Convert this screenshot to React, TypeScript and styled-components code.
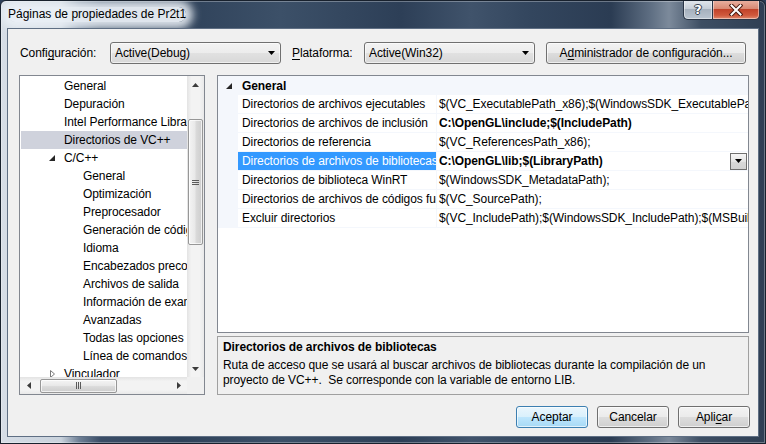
import React from 'react';
import styled, { createGlobalStyle, css } from 'styled-components';

const GlobalStyle = createGlobalStyle`
  html, body { margin: 0; padding: 0; background: #2c3e57; }
  body {
    font-family: "Liberation Sans", Arial, sans-serif;
    font-size: 12px;
    letter-spacing: -0.08px;
    color: #000;
  }
  * { box-sizing: border-box; }
`;

const Frame = styled.div`
  width: 766px;
  height: 444px;
  display: flex;
  flex-direction: column;
  border: 1px solid #18212d;
  border-radius: 6px 6px 0 0;
  overflow: hidden;
  background: linear-gradient(
    to right,
    #d6dde6 0px,
    #c9d2dc 60px,
    #6f8096 78px,
    #3a4d66 100px,
    #2f425a 180px,
    #3c5068 280px,
    #2d3f57 400px,
    #40536b 470px,
    #33465e 530px,
    #2b3c53 610px,
    #5f6f83 650px,
    #7c8a9b 668px,
    #3d4e63 700px,
    #2e3e53 766px
  );
  box-shadow: inset 0 0 0 1px rgba(255, 255, 255, 0.3);
`;

const TitleBar = styled.div`
  height: 27px;
  display: flex;
  align-items: center;
  padding: 0 5px 0 7px;
`;

const TitleText = styled.span`
  font-size: 12px;
  line-height: 15px;
  letter-spacing: 0;
  color: #000;
  background: rgba(234, 239, 245, 0.94);
  border-radius: 10px;
  box-shadow: 0 0 9px 7px rgba(234, 239, 245, 0.9);
`;

const CaptionGroup = styled.div`
  margin-left: auto;
  align-self: flex-start;
  margin-top: -1px;
  display: flex;
`;

const CaptionButton = styled.div<{ $kind: 'help' | 'close' }>`
  height: 20px;
  display: flex;
  align-items: center;
  justify-content: center;
  border: 1px solid #2a3647;
  border-top: none;
  box-shadow: inset 0 0 0 1px rgba(255, 255, 255, 0.45);
  ${(p) =>
    p.$kind === 'help'
      ? css`
          width: 29px;
          border-radius: 0 0 0 5px;
          border-right: none;
          background: linear-gradient(#e3e8ee 0%, #c7cfd8 45%, #a6b1be 50%, #b9c4d0 100%);
        `
      : css`
          width: 48px;
          border-radius: 0 0 5px 0;
          background: linear-gradient(#eab3a4 0%, #d98a74 45%, #c1432a 50%, #cf583c 80%, #e08a6e 100%);
        `}
`;

const HelpGlyph = styled.span`
  font-family: "DejaVu Sans", sans-serif;
  font-weight: bold;
  font-size: 13px;
  line-height: 13px;
  color: #fff;
  text-shadow: 0 0 1px #2b3440, 1px 0 0 #3a4656, -1px 0 0 #3a4656, 0 1px 0 #3a4656, 0 -1px 0 #3a4656;
`;

const Client = styled.div`
  flex: 1;
  margin: 0 6px 6px;
  border: 1px solid #5f6f84;
  background: #f0f0f0;
  display: flex;
  flex-direction: column;
`;

const TopRow = styled.div`
  margin-top: 13px;
  height: 22px;
  padding-left: 12px;
  display: flex;
  align-items: center;
`;

const Label = styled.span<{ $w: number }>`
  width: ${(p) => p.$w}px;
  flex: none;
  white-space: nowrap;
`;

const Key = styled.span`
  text-decoration: underline;
  text-underline-offset: 2px;
`;

const Combo = styled.div<{ $gap: number }>`
  width: 171px;
  height: 22px;
  flex: none;
  margin-right: ${(p) => p.$gap}px;
  border: 1px solid #707070;
  border-radius: 3px;
  background: linear-gradient(#f3f3f3 0%, #ececec 50%, #e1e1e1 50%, #d8d8d8 100%);
  box-shadow: inset 0 0 0 1px rgba(255, 255, 255, 0.6);
  display: flex;
  align-items: center;
  padding: 0 5px 0 4px;
`;

const ComboText = styled.span`
  flex: 1;
  white-space: nowrap;
  overflow: hidden;
`;

const PushButton = styled.div<{ $w: number; $default?: boolean }>`
  width: ${(p) => p.$w}px;
  height: 22px;
  flex: none;
  border: 1px solid ${(p) => (p.$default ? '#3c7fb1' : '#707070')};
  border-radius: 3px;
  background: ${(p) =>
    p.$default
      ? 'linear-gradient(#eaf6fd 0%, #d9f0fc 50%, #bee6fd 50%, #a7d9f5 100%)'
      : 'linear-gradient(#f3f3f3 0%, #ebebeb 50%, #dddddd 50%, #cfcfcf 100%)'};
  box-shadow: inset 0 0 0 1px rgba(255, 255, 255, 0.65);
  display: flex;
  align-items: center;
  justify-content: center;
  white-space: nowrap;
`;

const Main = styled.div`
  margin-top: 11px;
  height: 320px;
  display: flex;
  gap: 12px;
  padding: 0 9px 0 11px;
`;

/* ---------- tree ---------- */

const TreePanel = styled.div`
  width: 186px;
  height: 320px;
  flex: none;
  border: 1px solid #828790;
  background: #fff;
  display: flex;
  flex-direction: column;
`;

const TreeBody = styled.div`
  flex: 1;
  display: flex;
  min-height: 0;
`;

const TreeContent = styled.div`
  flex: 1;
  overflow: hidden;
  padding-top: 1px;
`;

const TreeRow = styled.div<{ $level: number; $selected?: boolean }>`
  height: 18px;
  margin-left: 1px;
  display: flex;
  align-items: center;
  padding-left: ${(p) => 27 + 19 * (p.$level - 1)}px;
  background: ${(p) => (p.$selected ? '#cfd2dc' : 'transparent')};
  white-space: nowrap;
`;

const Expander = styled.span`
  width: 16px;
  flex: none;
  display: flex;
  align-items: center;
`;

const VScroll = styled.div`
  width: 17px;
  flex: none;
  display: flex;
  flex-direction: column;
  background: linear-gradient(to right, #e3e3e3, #f3f3f3 25%, #f3f3f3 75%, #e9e9e9);
`;

const HScrollRow = styled.div`
  height: 17px;
  flex: none;
  display: flex;
`;

const HScroll = styled.div`
  flex: 1;
  display: flex;
  align-items: center;
  background: linear-gradient(#e3e3e3, #f3f3f3 25%, #f3f3f3 75%, #e9e9e9);
`;

const Corner = styled.div`
  width: 17px;
  background: #f0f0f0;
`;

const ArrowBox = styled.div`
  width: 17px;
  height: 17px;
  flex: none;
  display: flex;
  align-items: center;
  justify-content: center;
`;

const TrackFill = styled.div`
  flex: 1;
`;

const Thumb = styled.div<{ $vertical?: boolean }>`
  border: 1px solid #979797;
  border-radius: 2px;
  display: flex;
  align-items: center;
  justify-content: center;
  ${(p) =>
    p.$vertical
      ? css`
          width: 15px;
          height: 126px;
          margin: 26px 0 0 1px;
          background: linear-gradient(to right, #f4f4f4 0%, #e9e9e9 45%, #dadada 55%, #cdcdcd 100%);
        `
      : css`
          width: 77px;
          height: 14px;
          margin-left: 3px;
          background: linear-gradient(#f4f4f4 0%, #e9e9e9 45%, #dadada 55%, #cdcdcd 100%);
        `}
  box-shadow: inset 0 0 0 1px rgba(255, 255, 255, 0.7);
`;

/* ---------- property grid ---------- */

const RightColumn = styled.div`
  flex: 1;
  display: flex;
  flex-direction: column;
  gap: 3px;
  min-width: 0;
`;

const Grid = styled.div`
  height: 258px;
  flex: none;
  border: 1px solid #828790;
  background: #fff;
  overflow: hidden;
`;

const CategoryRow = styled.div`
  height: 19px;
  display: flex;
  align-items: center;
  background: #f4f7fc;
  font-weight: bold;
`;

const Gutter = styled.div`
  width: 20px;
  flex: none;
  display: flex;
  align-items: center;
  padding-left: 7px;
`;

const CategoryLabel = styled.span`
  padding-left: 4px;
`;

const PropRow = styled.div`
  height: 19px;
  display: flex;
  background: #f4f7fc;
`;

const NameCell = styled.div<{ $selected?: boolean }>`
  width: 198px;
  flex: none;
  height: 18px;
  line-height: 18px;
  padding-left: 4px;
  overflow: hidden;
  white-space: nowrap;
  background: ${(p) => (p.$selected ? '#3399ff' : '#fff')};
  color: ${(p) => (p.$selected ? '#fff' : '#000')};
`;

const ValueCell = styled.div<{ $bold?: boolean }>`
  flex: 1;
  min-width: 0;
  height: 18px;
  margin-left: 1px;
  background: #fff;
  display: flex;
  align-items: center;
  font-weight: ${(p) => (p.$bold ? 'bold' : 'normal')};
`;

const ValueText = styled.span`
  flex: 1;
  min-width: 0;
  padding-left: 2px;
  overflow: hidden;
  white-space: nowrap;
`;

const DropButton = styled.div`
  width: 17px;
  height: 17px;
  flex: none;
  margin-right: 1px;
  border: 1px solid #6f6f6f;
  background: linear-gradient(#f6f6f6, #e4e4e4 50%, #d9d9d9 50%, #d2d2d2);
  display: flex;
  align-items: center;
  justify-content: center;
`;

const Description = styled.div`
  flex: 1;
  border: 1px solid #a0a0a0;
  background: #f0f0f0;
  padding: 3px 5px;
  line-height: 15px;
`;

const DescTitle = styled.div`
  font-weight: bold;
  margin-bottom: 3px;
`;

const ButtonRow = styled.div`
  margin-top: 11px;
  display: flex;
  justify-content: flex-end;
  gap: 9px;
  padding-right: 8px;
`;

/* ---------- icons ---------- */

const Tri = ({ dir, color = '#3c3c3c' }: { dir: 'up' | 'down' | 'left' | 'right'; color?: string }) => {
  const pts: Record<string, string> = {
    up: '0,4 3.5,0 7,4',
    down: '0,0 7,0 3.5,4',
    left: '4,0 4,7 0,3.5',
    right: '0,0 4,3.5 0,7',
  };
  const v = dir === 'up' || dir === 'down';
  return (
    <svg width={v ? 7 : 4} height={v ? 4 : 7} viewBox={v ? '0 0 7 4' : '0 0 4 7'}>
      <polygon points={pts[dir]} fill={color} />
    </svg>
  );
};

const ExpandedIcon = () => (
  <svg width="6" height="6" viewBox="0 0 6 6" style={{ marginLeft: 1 }}>
    <polygon points="6,0 6,6 0,6" fill="#262626" />
  </svg>
);

const CollapsedIcon = () => (
  <svg width="6" height="8" viewBox="0 0 6 8" style={{ marginLeft: 2 }}>
    <polygon points="0.5,0.5 4.5,4 0.5,7.5" fill="#fff" stroke="#7a7a7a" strokeWidth="1" />
  </svg>
);

const CloseIcon = () => (
  <svg width="14" height="12" viewBox="0 0 14 12">
    <path d="M2.5 1.5 L11.5 10.5 M11.5 1.5 L2.5 10.5" stroke="#4a1a10" strokeWidth="4" strokeLinecap="square" />
    <path d="M2.5 1.5 L11.5 10.5 M11.5 1.5 L2.5 10.5" stroke="#fff" strokeWidth="2" strokeLinecap="square" />
  </svg>
);

const GripV = () => (
  <svg width="7" height="7" viewBox="0 0 7 7">
    <path d="M0 1.5h7M0 3.5h7M0 5.5h7" stroke="#5a5a5a" strokeWidth="1" />
  </svg>
);

const GripH = () => (
  <svg width="7" height="7" viewBox="0 0 7 7">
    <path d="M1.5 0v7M3.5 0v7M5.5 0v7" stroke="#5a5a5a" strokeWidth="1" />
  </svg>
);

/* ---------- data ---------- */

type TreeItem = { label: string; level: number; selected?: boolean; exp?: 'open' | 'closed' };

const treeItems: TreeItem[] = [
  { label: 'General', level: 1 },
  { label: 'Depuración', level: 1 },
  { label: 'Intel Performance Libraries', level: 1 },
  { label: 'Directorios de VC++', level: 1, selected: true },
  { label: 'C/C++', level: 1, exp: 'open' },
  { label: 'General', level: 2 },
  { label: 'Optimización', level: 2 },
  { label: 'Preprocesador', level: 2 },
  { label: 'Generación de código', level: 2 },
  { label: 'Idioma', level: 2 },
  { label: 'Encabezados precompilados', level: 2 },
  { label: 'Archivos de salida', level: 2 },
  { label: 'Información de examinador', level: 2 },
  { label: 'Avanzadas', level: 2 },
  { label: 'Todas las opciones', level: 2 },
  { label: 'Línea de comandos', level: 2 },
  { label: 'Vinculador', level: 1, exp: 'closed' },
];

type Prop = { name: string; value: string; bold?: boolean; selected?: boolean };

const props: Prop[] = [
  {
    name: 'Directorios de archivos ejecutables',
    value: '$(VC_ExecutablePath_x86);$(WindowsSDK_ExecutablePath);$(VS_ExecutablePath);$(MSBuild_ExecutablePath)',
  },
  { name: 'Directorios de archivos de inclusión', value: 'C:\\OpenGL\\include;$(IncludePath)', bold: true },
  { name: 'Directorios de referencia', value: '$(VC_ReferencesPath_x86);' },
  {
    name: 'Directorios de archivos de bibliotecas',
    value: 'C:\\OpenGL\\lib;$(LibraryPath)',
    bold: true,
    selected: true,
  },
  { name: 'Directorios de biblioteca WinRT', value: '$(WindowsSDK_MetadataPath);' },
  { name: 'Directorios de archivos de códigos fuente', value: '$(VC_SourcePath);' },
  {
    name: 'Excluir directorios',
    value: '$(VC_IncludePath);$(WindowsSDK_IncludePath);$(MSBuild_ExecutablePath);$(VC_LibraryPath_x86);',
  },
];

export default function App() {
  return (
    <>
      <GlobalStyle />
      <Frame>
        <TitleBar>
          <TitleText>Páginas de propiedades de Pr2t1</TitleText>
          <CaptionGroup>
            <CaptionButton $kind="help">
              <HelpGlyph>?</HelpGlyph>
            </CaptionButton>
            <CaptionButton $kind="close">
              <CloseIcon />
            </CaptionButton>
          </CaptionGroup>
        </TitleBar>

        <Client>
          <TopRow>
            <Label $w={90}>
              Confi<Key>g</Key>uración:
            </Label>
            <Combo $gap={11}>
              <ComboText>Active(Debug)</ComboText>
              <Tri dir="down" color="#000" />
            </Combo>
            <Label $w={72}>
              <Key>P</Key>lataforma:
            </Label>
            <Combo $gap={11}>
              <ComboText>Active(Win32)</ComboText>
              <Tri dir="down" color="#000" />
            </Combo>
            <PushButton $w={200}>
              <span>
                A<Key>d</Key>ministrador de configuración...
              </span>
            </PushButton>
          </TopRow>

          <Main>
            <TreePanel>
              <TreeBody>
                <TreeContent>
                  {treeItems.map((it, i) => (
                    <TreeRow key={i} $level={it.level} $selected={it.selected}>
                      <Expander>
                        {it.exp === 'open' && <ExpandedIcon />}
                        {it.exp === 'closed' && <CollapsedIcon />}
                      </Expander>
                      <span>{it.label}</span>
                    </TreeRow>
                  ))}
                </TreeContent>
                <VScroll>
                  <ArrowBox>
                    <Tri dir="up" />
                  </ArrowBox>
                  <Thumb $vertical>
                    <GripV />
                  </Thumb>
                  <TrackFill />
                  <ArrowBox>
                    <Tri dir="down" />
                  </ArrowBox>
                </VScroll>
              </TreeBody>
              <HScrollRow>
                <HScroll>
                  <ArrowBox>
                    <Tri dir="left" />
                  </ArrowBox>
                  <Thumb>
                    <GripH />
                  </Thumb>
                  <TrackFill />
                  <ArrowBox>
                    <Tri dir="right" />
                  </ArrowBox>
                </HScroll>
                <Corner />
              </HScrollRow>
            </TreePanel>

            <RightColumn>
              <Grid>
                <CategoryRow>
                  <Gutter>
                    <ExpandedIcon />
                  </Gutter>
                  <CategoryLabel>General</CategoryLabel>
                </CategoryRow>
                {props.map((p, i) => (
                  <PropRow key={i}>
                    <Gutter />
                    <NameCell $selected={p.selected}>{p.name}</NameCell>
                    <ValueCell $bold={p.bold}>
                      <ValueText>{p.value}</ValueText>
                      {p.selected && (
                        <DropButton>
                          <Tri dir="down" color="#000" />
                        </DropButton>
                      )}
                    </ValueCell>
                  </PropRow>
                ))}
              </Grid>
              <Description>
                <DescTitle>Directorios de archivos de bibliotecas</DescTitle>
                <div>
                  Ruta de acceso que se usará al buscar archivos de bibliotecas durante la compilación de un
                  <br />
                  {'proyecto de VC++.\u00a0 Se corresponde con la variable de entorno LIB.'}
                </div>
              </Description>
            </RightColumn>
          </Main>

          <ButtonRow>
            <PushButton $w={72} $default>
              Aceptar
            </PushButton>
            <PushButton $w={72}>Cancelar</PushButton>
            <PushButton $w={72}>
              Apli<Key>c</Key>ar
            </PushButton>
          </ButtonRow>
        </Client>
      </Frame>
    </>
  );
}
